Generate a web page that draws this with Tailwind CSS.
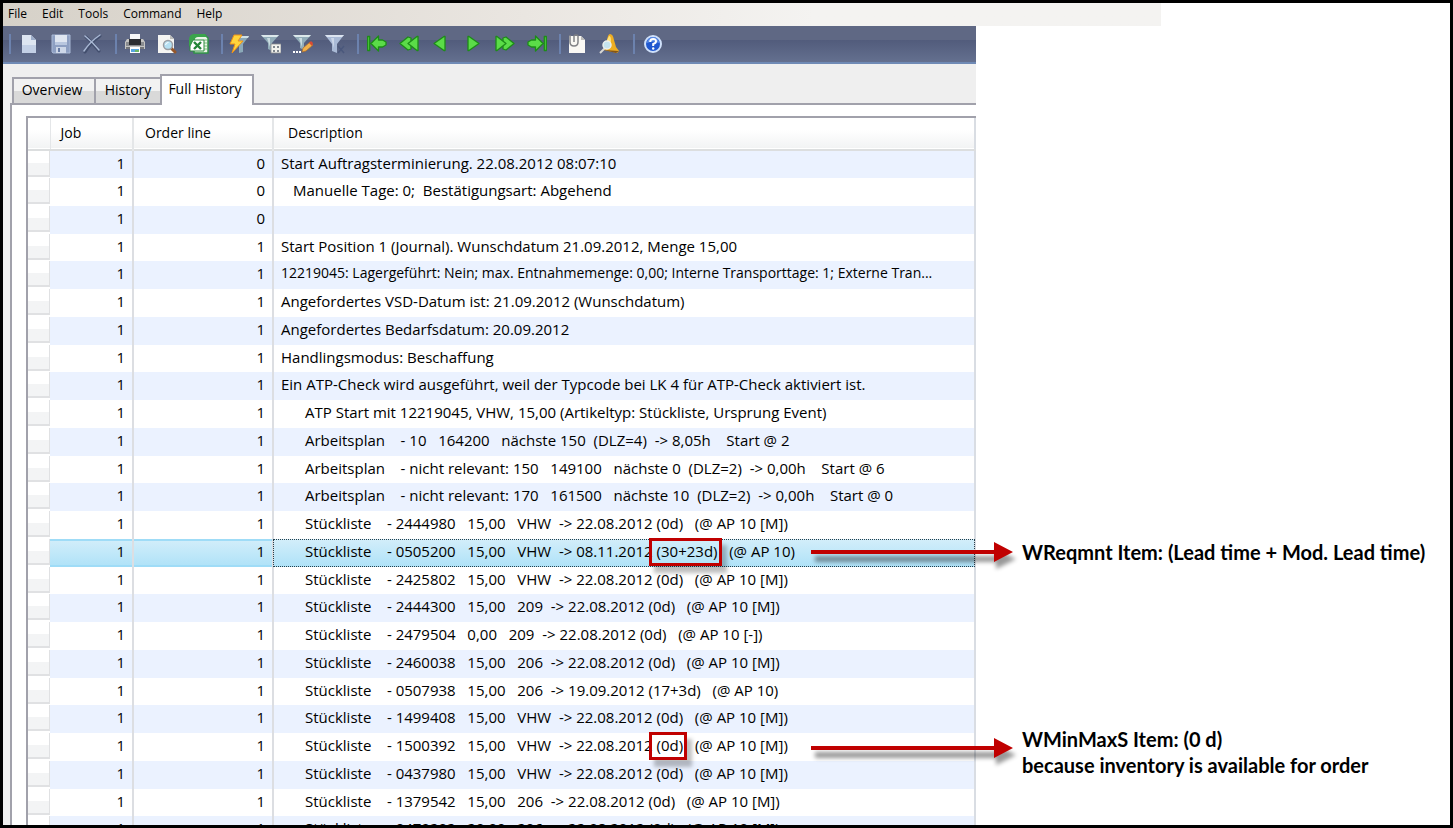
<!DOCTYPE html>
<html lang="de">
<head>
<meta charset="utf-8">
<title>ATP Full History</title>
<script src="https://cdn.jsdelivr.net/npm/@tailwindcss/browser@4"></script>
</head>
<body class="bg-black font-['Open_Sans','Noto_Sans',sans-serif] text-black">
<div class="flex h-screen flex-col overflow-hidden border-3 border-black bg-white">

  <nav class="flex h-[23px] w-[80%] shrink-0 items-center gap-[15px] bg-linear-to-r from-[#d6d1c8] via-[#eae6e1] via-45% to-[#f4f3f1] to-70% pb-px pl-[5px] text-xs" aria-label="Main menu">
    <button>File</button><button>Edit</button><button>Tools</button><button>Command</button><button>Help</button>
  </nav>

  <div class="flex min-h-0 flex-1">
    <main class="flex min-w-0 flex-[973] flex-col bg-[#efefef]">

      <!-- Toolbar -->
      <div class="flex h-[38px] shrink-0 items-center border-b-2 border-[#6f8ab5] bg-linear-to-b from-[#5f6884] from-40% via-[#525c7c] via-40% to-[#64708f]" role="toolbar" aria-label="Toolbar">
        <span class="mr-0.5 ml-1.5 h-5 w-0.5 bg-[#6c82ae]"></span>
        <button class="flex w-8 justify-center" aria-label="New"><svg class="size-5" viewBox="0 0 20 20"><path d="M3 1h9l5 5v13H3z" fill="#dde5f1"/><path d="M3 11h14v8H3z" fill="#c3d0e6"/><path d="M12 1v5h5z" fill="#9dadc9"/></svg></button>
        <button class="flex w-8 justify-center" aria-label="Save"><svg class="size-5" viewBox="0 0 20 20"><path d="M1 1h18v18H2l-1-1z" fill="#8d9fc2" stroke="#a9b9d6"/><path d="M4 1h12v9H4z" fill="#dfe6f1"/><path d="M4 8h12v3H4z" fill="#b9c7df"/><path d="M5 13h10v6H5z" fill="#cdd7e8"/><path d="M7 14h2v4H7z" fill="#677ba5"/></svg></button>
        <button class="flex w-8 justify-center" aria-label="Delete"><svg class="size-5" viewBox="0 0 20 20" fill="none" stroke-linecap="round"><path d="M3 3c5 4 9 9 13 14M17 2C11 6 6 11 2 18" stroke="#424e6d" stroke-width="3"/><path d="M2 2c5 4 10 9 14 14M17 1C11 5 5 11 1 17" stroke="#a9b8d4" stroke-width="1.500"/></svg></button>
        <span class="mr-0.5 ml-1.5 h-5 w-0.5 bg-[#6c82ae]"></span>
        <button class="flex w-8 justify-center" aria-label="Print"><svg class="size-5" viewBox="0 0 20 20"><path d="M5 0h10v7H5z" fill="#f8f8f8"/><path d="M2 5h16l2 3v7H0V8z" fill="#c5c5c3"/><path d="M1 8h18v4H1z" fill="#8a8c90"/><path d="M4 5h12v6H4z" fill="#2c2e33"/><path d="M1 13h18v2H1z" fill="#73757a"/><path d="M5 13h10v6H5z" fill="#fff"/><path d="M6 15h8v3H6z" fill="#58a6e0"/><path d="M10 16h4v2h-4z" fill="#69b668"/></svg></button>
        <button class="flex w-8 justify-center" aria-label="Print preview"><svg class="size-5" viewBox="0 0 20 20"><path d="M1 1h12l4 4v14H1z" fill="#f4f4f2"/><path d="M13 1v4h4z" fill="#bdbdbb"/><path d="m14 14 4 4" stroke="#96572a" stroke-width="3" stroke-linecap="round"/><circle cx="11" cy="11" r="4.500" fill="#b5e0f3" stroke="#9b9ea4" stroke-width="1.500"/><path d="M8.500 11a3 3 0 0 1 3-2.500" fill="none" stroke="#fff"/></svg></button>
        <button class="flex w-8 justify-center" aria-label="Export to Excel"><svg class="size-5" viewBox="0 0 20 20"><path d="M5 1h11l3 3v15H5z" fill="#e9f4e7" stroke="#2f9445" stroke-width="1.500"/><path d="M15 6h3M15 9h3M15 12h3M15 15h3" stroke="#7cbd7d"/><path d="M5 0h11l2 3H9Q6 3 5 7l-5 6V6q0-6 5-6z" fill="#3aa44c"/><path d="M4 6h11v11H1V12z" fill="#fff" stroke="#2c8b3d"/><path d="m5 8 7 7M12 8l-7 7" stroke="#238437" stroke-width="2.400"/></svg></button>
        <span class="ml-1.5 h-5 w-0.5 bg-[#6c82ae]"></span>
        <button class="flex w-8 justify-center" aria-label="Quick filter"><svg class="size-5" viewBox="0 0 20 20"><path d="M6 2h14l-6 8v8l-4 1v-9z" fill="#8ba9b8"/><path d="M6 2h14l-1 2H8z" fill="#cfe0e5"/><path d="M5 1h8L9 7h5L3 19l3-9H1z" fill="#ffd43c" stroke="#ee9218"/></svg></button>
        <button class="flex w-8 justify-center" aria-label="Filter by grid"><svg class="size-5" viewBox="0 0 20 20"><path d="M0 1h18l-7 8v8l-4-2V9z" fill="#92adb9"/><path d="M0 1h18l-2 2H2z" fill="#dce8eb"/><path d="M6 4h3v9z" fill="#c9dbe0"/><path d="M10 10h10v9H10z" fill="#f2f2ee" stroke="#898a8d" stroke-width=".8"/><path d="M12 12h2v2h-2zM16 12h2v2h-2zM12 16h2v2h-2zM16 16h2v2h-2z" fill="#81888f"/></svg></button>
        <button class="flex w-8 justify-center" aria-label="Edit filter"><svg class="size-5" viewBox="0 0 20 20"><path d="M0 1h18l-7 8v7l-4-2V9z" fill="#92adb9"/><path d="M0 1h18l-2 2H2z" fill="#dce8eb"/><path d="M6 4h3v9z" fill="#c9dbe0"/><path d="m9 18 1-4 7-6 3 3-7 6z" fill="#f1b24c" stroke="#a9682b" stroke-width=".7"/><path d="m16 9 2-2 2 2-1 3z" fill="#d84b34"/><path d="M0 18h2M3 18h2M6 18h2" stroke="#fff" stroke-width="2"/></svg></button>
        <button class="flex w-8 justify-center" aria-label="Clear filter"><svg class="size-5" viewBox="0 0 20 20"><path d="M0 1h19l-7 9v9l-5-2v-7z" fill="#a9bad6"/><path d="M0 1h19l-2 2H2z" fill="#dce4f0"/><path d="M6 4h3v10z" fill="#cbd6e8"/><path d="m13 12 6 7M19 12l-6 7" stroke="#4a587c" stroke-width="1.500"/></svg></button>
        <span class="mr-0.5 ml-1.5 h-5 w-0.5 bg-[#6c82ae]"></span>
        <button class="flex w-8 justify-center" aria-label="First record"><svg class="size-5" viewBox="0 0 20 20" fill="#5bdc48" stroke="#1d8c18" stroke-width="1.300" stroke-linejoin="round"><path d="M0.700 2.500h2v14h-2zM4 9.500 11.500 2v4h4l3.500 2v3l-3.500 2h-4v4z"/></svg></button>
        <button class="flex w-8 justify-center" aria-label="Fast back"><svg class="size-5" viewBox="0 0 20 20" fill="#5bdc48" stroke="#1d8c18" stroke-width="1.300" stroke-linejoin="round"><path d="M1 9.500 9 3l3 1v11l-3 1z"/><path d="M9 9.500 18 2.500h1v14h-1z"/></svg></button>
        <button class="flex w-8 justify-center" aria-label="Previous record"><svg class="size-5" viewBox="0 0 20 20" fill="#5bdc48" stroke="#1d8c18" stroke-width="1.300" stroke-linejoin="round"><path d="M3 9.500 13 2.500h1v14h-1z"/></svg></button>
        <button class="flex w-8 justify-center" aria-label="Next record"><svg class="size-5" viewBox="0 0 20 20" fill="#5bdc48" stroke="#1d8c18" stroke-width="1.300" stroke-linejoin="round"><path d="M16 9.500 6 2.500H5v14h1z"/></svg></button>
        <button class="flex w-8 justify-center" aria-label="Fast forward"><svg class="size-5" viewBox="0 0 20 20" fill="#5bdc48" stroke="#1d8c18" stroke-width="1.300" stroke-linejoin="round"><path d="M19 9.500 11 3 8 4v11l3 1z"/><path d="M11 9.500 2 2.500H1v14h1z"/></svg></button>
        <button class="flex w-8 justify-center" aria-label="Last record"><svg class="size-5" viewBox="0 0 20 20" fill="#5bdc48" stroke="#1d8c18" stroke-width="1.300" stroke-linejoin="round"><path d="M19.300 2.500h-2v14h2zM16 9.500 8.500 2v4h-4L1 8v3l3.500 2h4v4z"/></svg></button>
        <span class="ml-1.5 h-5 w-0.5 bg-[#6c82ae]"></span>
        <button class="flex w-8 justify-center" aria-label="Attachments"><svg class="size-5" viewBox="0 0 20 20"><path d="M2 2h12l4 4v13H2z" fill="#f9f8f4"/><path d="M14 2v4h4z" fill="#bcbcb9"/><path d="M3 1v7q0 4 4 4t4-4V2q0-1-2-1T7 2v6" fill="none" stroke="#818286" stroke-width="1.500"/></svg></button>
        <button class="flex w-8 justify-center" aria-label="Alerts"><svg class="size-5" viewBox="0 0 20 20"><path d="M11 0q3 0 4 6l2 7 3 4-2 2-13-3 2-3 1-7q1-6 3-6z" fill="#efae22"/><path d="M10 2q2 0 2 5l-1 6-4-1 1-6z" fill="#ffe27b"/><path d="m5 16 15 1-3 2z" fill="#81541a"/><path d="m6 14-5 5" stroke="#d8d8d4" stroke-width="2"/><circle cx="8" cy="11" r="4" fill="#c5e3ee" stroke="#ecefed" stroke-width="1.500"/></svg></button>
        <span class="mr-0.5 ml-2 h-5 w-0.5 bg-[#6c82ae]"></span>
        <button class="flex w-8 justify-center" aria-label="Help"><svg class="size-5" viewBox="0 0 20 20"><circle cx="10" cy="10" r="8" fill="#1f57cf" stroke="#cfe0fa" stroke-width="2"/><path d="M4 9a6 6 0 0 1 12 0q-6-3-12 0z" fill="#5f90e8"/><path d="M7.200 8q0-3 3-3t2.800 2.500Q13 9 10.200 10v2" fill="none" stroke="#fff" stroke-width="2"/><circle cx="10.200" cy="14.500" r="1.200" fill="#fff"/></svg></button>
      </div>

      <!-- Tabs -->
      <div class="z-10 -mb-0.5 flex h-[41px] shrink-0 items-end pl-[9px] text-sm" role="tablist">
        <button role="tab" class="h-7 w-[82px] border-2 border-r-0 border-[#a1a1ab] bg-linear-to-b from-[#f2f2f2] from-50% to-[#d9d9d9] to-50% pr-1 pb-0.5">Overview</button>
        <button role="tab" class="h-7 w-[66px] border-2 border-r-0 border-[#a1a1ab] bg-linear-to-b from-[#f2f2f2] from-50% to-[#d9d9d9] to-50% pb-0.5">History</button>
        <button role="tab" aria-selected="true" class="h-[31px] w-[94px] border-2 border-b-0 border-[#a1a1ab] bg-white pr-1 pb-1">Full History</button>
      </div>

      <!-- Tab panel with the grid -->
      <section class="ml-[7px] min-h-0 flex-1 overflow-hidden border-t-2 border-l-2 border-[#a1a1ab] bg-white pt-[11px] pl-3.5" role="tabpanel">
        <div class="border-t-2 border-l-2 border-[#a1a1ab]">
          <table class="w-full table-fixed border-r-2 border-[#d9dde3] text-[15px] leading-5">
            <colgroup><col class="w-[22px]"><col class="w-[83px]"><col class="w-[140px]"><col></colgroup>
            <thead>
              <tr class="h-8 border-b-2 border-[#dcdedf] bg-linear-to-b from-white from-40% to-[#f2f3f4] text-left text-sm">
                <th class="border-r border-[#e4e6e8]"></th>
                <th class="border-r-2 border-[#e4e6e8] p-0 pb-0.5 pl-2.5 font-normal">Job</th>
                <th class="border-r-2 border-[#e4e6e8] p-0 pb-0.5 pl-[11px] font-normal">Order line</th>
                <th class="p-0 pb-0.5 pl-3.5 font-normal">Description</th>
              </tr>
            </thead>
            <tbody id="rows"></tbody>
          </table>
        </div>
      </section>
    </main>

    <!-- Callouts -->
    <aside class="z-20 min-w-0 flex-[474] font-['Lato',sans-serif] text-xl leading-[26px] font-bold whitespace-nowrap">
      <div class="relative mt-[513px] ml-[46px]">
        <svg class="absolute top-0 right-full mr-1 h-9 w-[210px] overflow-visible" viewBox="0 0 210 36"><g class="blur-[2px]" fill="#000" opacity=".4"><path d="M7 17h181v-7l20 10-20 10v-7H7z"/></g><path d="M3 11h183V3l19 10-19 10v-8H3z" fill="#c00000"/></svg>
        <p>WReqmnt Item: (Lead time + Mod. Lead time)</p>
      </div>
      <div class="relative mt-[161px] ml-[46px]">
        <svg class="absolute top-[9px] right-full mr-1 h-9 w-[210px] overflow-visible" viewBox="0 0 210 36"><g class="blur-[2px]" fill="#000" opacity=".4"><path d="M7 17h181v-7l20 10-20 10v-7H7z"/></g><path d="M3 11h183V3l19 10-19 10v-8H3z" fill="#c00000"/></svg>
        <p>WMinMaxS Item: (0 d)</p>
        <p>because inventory is available for order</p>
      </div>
    </aside>
  </div>
</div>

<script>
// [order line, indent level, text]; text inside {} is outlined in red
const data = [
  [0, 0, 'Start Auftragsterminierung. 22.08.2012 08:07:10'],
  [0, 1, 'Manuelle Tage: 0;  Bestätigungsart: Abgehend'],
  [0, 0, ''],
  [1, 0, 'Start Position 1 (Journal). Wunschdatum 21.09.2012, Menge 15,00'],
  [1, 0, '12219045: Lagergeführt: Nein; max. Entnahmemenge: 0,00; Interne Transporttage: 1; Externe Tran...'],
  [1, 0, 'Angefordertes VSD-Datum ist: 21.09.2012 (Wunschdatum)'],
  [1, 0, 'Angefordertes Bedarfsdatum: 20.09.2012'],
  [1, 0, 'Handlingsmodus: Beschaffung'],
  [1, 0, 'Ein ATP-Check wird ausgeführt, weil der Typcode bei LK 4 für ATP-Check aktiviert ist.'],
  [1, 2, 'ATP Start mit 12219045, VHW, 15,00 (Artikeltyp: Stückliste, Ursprung Event)'],
  [1, 2, 'Arbeitsplan    - 10   164200   nächste 150  (DLZ=4)  -> 8,05h    Start @ 2'],
  [1, 2, 'Arbeitsplan    - nicht relevant: 150   149100   nächste 0  (DLZ=2)  -> 0,00h    Start @ 6'],
  [1, 2, 'Arbeitsplan    - nicht relevant: 170   161500   nächste 10  (DLZ=2)  -> 0,00h    Start @ 0'],
  [1, 2, 'Stückliste    - 2444980   15,00   VHW  -> 22.08.2012 (0d)   (@ AP 10 [M])'],
  [1, 2, 'Stückliste    - 0505200   15,00   VHW  -> 08.11.2012 {(30+23d)}   (@ AP 10)'],
  [1, 2, 'Stückliste    - 2425802   15,00   VHW  -> 22.08.2012 (0d)   (@ AP 10 [M])'],
  [1, 2, 'Stückliste    - 2444300   15,00   209  -> 22.08.2012 (0d)   (@ AP 10 [M])'],
  [1, 2, 'Stückliste    - 2479504   0,00   209  -> 22.08.2012 (0d)   (@ AP 10 [-])'],
  [1, 2, 'Stückliste    - 2460038   15,00   206  -> 22.08.2012 (0d)   (@ AP 10 [M])'],
  [1, 2, 'Stückliste    - 0507938   15,00   206  -> 19.09.2012 (17+3d)   (@ AP 10)'],
  [1, 2, 'Stückliste    - 1499408   15,00   VHW  -> 22.08.2012 (0d)   (@ AP 10 [M])'],
  [1, 2, 'Stückliste    - 1500392   15,00   VHW  -> 22.08.2012 {(0d)}   (@ AP 10 [M])'],
  [1, 2, 'Stückliste    - 0437980   15,00   VHW  -> 22.08.2012 (0d)   (@ AP 10 [M])'],
  [1, 2, 'Stückliste    - 1379542   15,00   206  -> 22.08.2012 (0d)   (@ AP 10 [M])'],
  [1, 2, 'Stückliste    - 0479202   20,00   206  -> 22.08.2012 (0d)   (@ AP 10 [M])'],
];
const selected = 14;
const indent = ['pl-[7px]', 'pl-[19px]', 'pl-[31px]'];
const box = '<span class="relative">$1<span class="absolute -top-[3px] -right-1 -bottom-[5px] -left-2 border-3 border-[#c00000] shadow-[5px_7px_4px_rgba(0,0,0,0.25)]"></span></span>';
document.getElementById('rows').innerHTML = data.map(([line, level, text], i) => {
  const on = i === selected;
  const fill = on ? 'bg-linear-to-b from-[#d3eefa] to-[#aee2f8]' : i % 2 ? 'bg-white' : 'bg-[#ebf2ff]';
  const edge = on ? 'shadow-[inset_0_2px_#9fdcf7,inset_0_-2px_#9fdcf7]' : '';
  const focus = on ? 'outline -outline-offset-1 outline-dotted outline-[#25404d]' : '';
  const size = text.length > 90 ? 'text-sm' : '';
  const html = text.replace(/>/g, '&gt;').replace(/\{(.*?)\}/, box);
  return `<tr class="h-7 nth-[4n]:h-[27px] ${fill}">
    <td class="bg-white p-0 align-top"><div class="h-[26px] border-r border-b-2 border-[#e0e1e3] bg-linear-to-b from-white from-50% to-[#f3f4f5] to-50%"></div></td>
    <td class="border-r-2 border-r-[#dcdee2] p-0 pr-[7px] pb-1 text-right ${edge}">1</td>
    <td class="border-r-2 border-r-[#dcdee2] p-0 pr-[7px] pb-1 text-right ${edge}">${line}</td>
    <td class="p-0 pb-1 whitespace-pre ${indent[level]} ${focus} ${size}">${html}</td>
  </tr>`;
}).join('');
</script>
</body>
</html>
